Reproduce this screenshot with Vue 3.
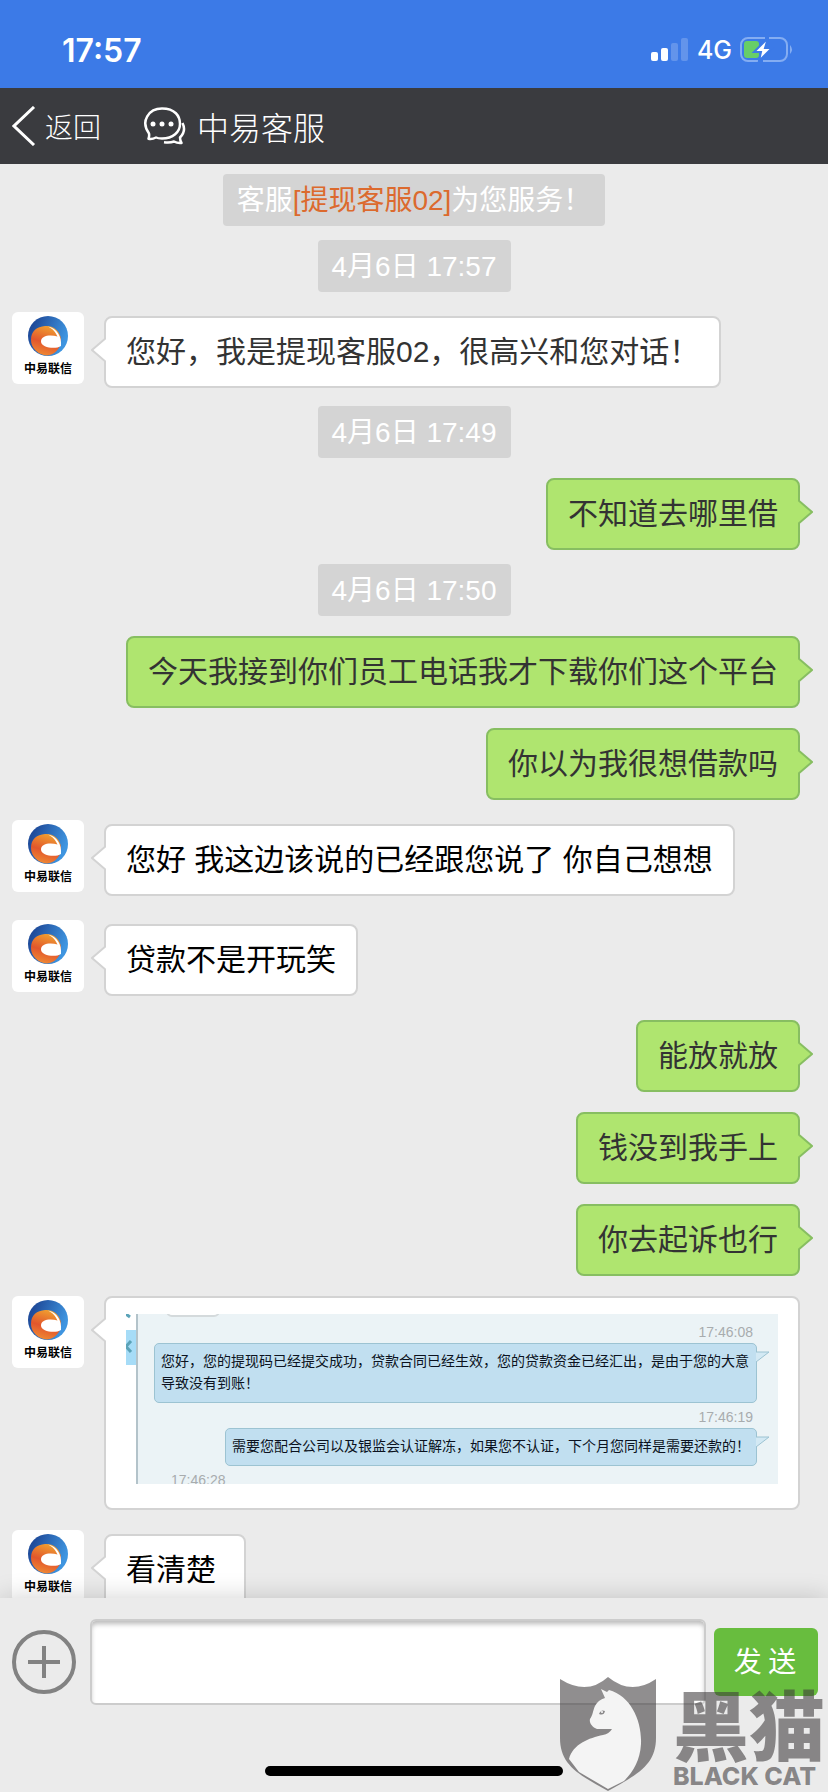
<template>
  <div class="page">
    <header>
      <div class="status">
        <span class="clock">17:57</span>
        <div class="status-right">
          <svg class="signal" viewBox="0 0 38 24" aria-hidden="true">
            <rect x="0" y="14" width="7" height="9" rx="2" />
            <rect x="10" y="10" width="7" height="13" rx="2" />
            <rect class="off" x="20" y="5" width="7" height="18" rx="2" />
            <rect class="off" x="30" y="0" width="7" height="23" rx="2" />
          </svg>
          <span class="net">4G</span>
          <svg class="battery" viewBox="0 0 54 26" aria-hidden="true">
            <path class="case" d="M25 1H8a7 7 0 0 0-7 7v9a7 7 0 0 0 7 7h10M29 1h11a7 7 0 0 1 7 7v9a7 7 0 0 1-7 7H23" />
            <path class="nub" d="M50 8q4 4.500 0 9z" />
            <rect class="level" x="4" y="4" width="15" height="17" rx="3" />
            <path class="bolt" d="M28 1L14 15h7l-2 9L32 11h-7z" />
          </svg>
        </div>
      </div>
      <nav class="nav">
        <a class="back" href="#">
          <svg viewBox="0 0 24 40" aria-hidden="true"><path d="M22 1L2 20l20 19" /></svg>
          <span>返回</span>
        </a>
        <h1 class="title">
          <svg viewBox="0 0 44 38" aria-hidden="true">
            <path d="M6 26.500C-3 14 6 1.500 19 1.500S37 9 37 17 30 31.500 19 31.500q-4 0-6-1-4 2-7.500 1.200Q6.500 29 6 26.500z" />
            <path d="M39.500 16q4 8-2.500 14.500 0 3 1.500 5.500-4 .5-7.500-1.500-4 1.500-10 .7" />
            <circle cx="10" cy="17" r="2.500" />
            <circle cx="19" cy="17" r="2.500" />
            <circle cx="28" cy="17" r="2.500" />
          </svg>
          <span>中易客服</span>
        </h1>
      </nav>
    </header>

    <svg class="defs" aria-hidden="true">
      <defs>
        <linearGradient id="ring" x1="0" y1="0" x2="1" y2="0.400">
          <stop offset="0.200" stop-color="#1f4c9b" />
          <stop offset="1" stop-color="#3f95e0" />
        </linearGradient>
        <linearGradient id="flame" x1="0.600" y1="0" x2="0.300" y2="1">
          <stop offset="0" stop-color="#f0a030" />
          <stop offset="0.550" stop-color="#e2562c" />
          <stop offset="1" stop-color="#f08c34" />
        </linearGradient>
      </defs>
      <symbol id="logo" viewBox="0 0 40 40">
        <circle cx="20" cy="20" r="20" fill="url(#ring)" />
        <path d="M17 10C25 9 33 15 33 24 33 32 27 39 19 39.500 10 39 3 32 3 24 3 15 9 10.500 17 10z" fill="url(#flame)" />
        <path d="M20 10.500C29 12 34 21 33 30 28 33.500 13 32 13 25.500 13 19.500 22 18.500 29.500 20.500 27.500 16 25 13 20 10.500z" fill="#fff" />
      </symbol>
    </svg>

    <main class="chat">
      <template v-for="(m, i) in messages" :key="i">
        <p v-if="m.type === 'notice'" class="tip">客服<em>{{ m.name }}</em>为您服务！</p>
        <p v-else-if="m.type === 'time'" class="tip">{{ m.text }}</p>
        <div v-else class="row" :class="[m.type, { pic: m.shot }]">
          <div v-if="m.type === 'left'" class="avatar">
            <svg><use href="#logo" /></svg>
            <span>中易联信</span>
          </div>
          <div class="bubble" :class="{ soft: m.soft }">
            <svg class="arrow" viewBox="0 0 15 26" aria-hidden="true"><path d="M15 1L1 13l14 12" /></svg>
            <div v-if="m.shot" class="shot">
              <div class="side">
                <svg viewBox="0 0 10 52" aria-hidden="true">
                  <rect y="16" width="10" height="35" />
                  <path d="M0 0l4 3M5 27L0 32.500 5 38" />
                </svg>
              </div>
              <div class="log">
                <i class="chip"></i>
                <template v-for="s in m.shot" :key="s.time">
                  <time :class="{ early: !s.text }">{{ s.time }}</time>
                  <div v-if="s.text" class="say">
                    {{ s.text }}
                    <svg viewBox="0 0 14 12" aria-hidden="true"><path d="M0 1h13L0 11" /></svg>
                  </div>
                </template>
              </div>
            </div>
            <span v-else class="text">{{ m.text }}</span>
          </div>
        </div>
      </template>
    </main>

    <footer>
      <form class="bar" @submit.prevent="send">
        <button type="button" class="plus" aria-label="更多">
          <svg viewBox="0 0 64 64"><circle cx="32" cy="32" r="30" /><path d="M16 32h32M32 16v32" /></svg>
        </button>
        <textarea v-model="draft" aria-label="消息"></textarea>
        <button type="submit" class="send">发 送</button>
      </form>
      <div class="home"></div>
    </footer>

    <div class="mark">
      <svg viewBox="0 0 98 116" aria-hidden="true">
        <path class="shield" d="M1 3Q28 20 49 1 72 20 97 3V62C97 88 80 98 49 115 18 98 1 88 1 62z" />
        <path class="cat" d="M46 22l-4-9 6 3 2-2C72 20 83 45 82 68 81 85 74 96 65 105L49 113 20 96 10 83C14 68 30 62 44 59q6-1 9-6H38c-5-2-8-6-7-10 3-4 3-9 5-13q3-6 10-8z" />
        <path class="eye" d="M40 38q2-5 6-3-1 5-6 3z" />
        <circle class="pupil" cx="43" cy="36" r="1" />
      </svg>
      <div class="words">
        <strong>黑猫</strong>
        <b>BLACK CAT</b>
      </div>
    </div>
  </div>
</template>

<script setup>
import { ref } from 'vue'

const draft = ref('')

const messages = ref([
  { type: 'notice', name: '[提现客服02]' },
  { type: 'time', text: '4月6日 17:57' },
  { type: 'left', text: '您好，我是提现客服02，很高兴和您对话！', soft: true },
  { type: 'time', text: '4月6日 17:49' },
  { type: 'right', text: '不知道去哪里借' },
  { type: 'time', text: '4月6日 17:50' },
  { type: 'right', text: '今天我接到你们员工电话我才下载你们这个平台' },
  { type: 'right', text: '你以为我很想借款吗' },
  { type: 'left', text: '您好 我这边该说的已经跟您说了 你自己想想' },
  { type: 'left', text: '贷款不是开玩笑' },
  { type: 'right', text: '能放就放' },
  { type: 'right', text: '钱没到我手上' },
  { type: 'right', text: '你去起诉也行' },
  {
    type: 'left',
    shot: [
      { time: '17:46:08', text: '您好，您的提现码已经提交成功，贷款合同已经生效，您的贷款资金已经汇出，是由于您的大意导致没有到账！' },
      { time: '17:46:19', text: '需要您配合公司以及银监会认证解冻，如果您不认证，下个月您同样是需要还款的！' },
      { time: '17:46:28' }
    ]
  },
  { type: 'left', text: '看清楚 ' }
])

function send(){
  if (!draft.value.trim()) return
  messages.value.push({ type: 'right', text: draft.value })
  draft.value = ''
}
</script>

<style>
body{ margin:0; background:#ebebeb; }
</style>

<style scoped>
.page{ position:relative; height:100vh; display:flex; flex-direction:column; overflow:hidden; background:#ebebeb; font-family:"Liberation Sans","Noto Sans CJK SC",sans-serif; }
.page *{ box-sizing:border-box; }
svg{ display:block; flex:none; fill:none; }
.defs{ position:absolute; width:0; height:0; }

.status{ height:88px; padding:12px 34px 0 62px; display:flex; align-items:center; justify-content:space-between; background:#3c7ae7; color:#fff; font-family:Inter,sans-serif; }
.clock{ font-size:32px; font-weight:600; }
.status-right{ display:flex; align-items:center; gap:8px; }
.signal{ width:38px; height:24px; fill:#fff; }
.signal .off{ opacity:.2; }
.net{ font-size:25px; font-weight:500; }
.battery{ width:54px; height:26px; }
.case{ stroke:#84adf2; stroke-width:2; }
.nub{ fill:#84adf2; }
.level{ fill:#67ce67; }
.bolt{ fill:#fff; stroke:#3c7ae7; stroke-width:2; }

.nav{ height:76px; padding:0 12px; display:flex; align-items:center; gap:42px; background:#3a3b3f; color:#fff; font-family:"Noto Sans CJK SC",sans-serif; font-weight:300; }
.back{ display:flex; align-items:center; gap:9px; color:#fff; font-size:28px; text-decoration:none; }
.back svg{ width:24px; height:40px; stroke:#fff; stroke-width:3; }
.title{ margin:0; display:flex; align-items:center; gap:10px; font-size:32px; font-weight:300; }
.title svg{ width:44px; height:38px; stroke:#fff; stroke-width:2.5; stroke-linejoin:round; }
.title circle{ fill:#fff; stroke:none; }

.chat{ flex:1; min-height:0; overflow:hidden; padding:16px 28px 0 12px; display:flex; flex-direction:column; gap:20px; }
.tip{ flex:none; align-self:center; margin:-6px -8px 0 8px; padding:2px 14px 0; border-radius:4px; background:#d4d4d4; color:#fff; font-size:28px; line-height:50px; }
.tip em{ color:#dc6a2e; font-style:normal; }

.row{ flex:none; display:flex; align-items:flex-start; }
.row.left{ gap:20px; padding-bottom:4px; }
.row.left .bubble{ margin-top:4px; }
.row.left.pic{ padding-bottom:0; }
.row.left.pic .bubble{ margin-top:0; }
.row.right{ justify-content:flex-end; }
.avatar{ flex:none; width:72px; height:72px; border-radius:6px; background:#fff; display:flex; flex-direction:column; align-items:center; padding-top:4px; }
.avatar svg{ width:40px; height:40px; }
.avatar span{ color:#000; font-size:12px; font-weight:700; line-height:26px; }

.bubble{ position:relative; padding:0 20px; border:2px solid #d3d3d3; border-radius:8px; background:#fff; color:#000; font-size:30px; line-height:68px; }
.bubble.soft{ color:#333; }
.text{ white-space:break-spaces; }
.right .bubble{ background:#afe56f; border-color:#87be61; color:#333; }
.arrow{ position:absolute; top:19px; left:-15px; width:15px; height:26px; fill:#fff; stroke:#d3d3d3; stroke-width:2; }
.right .arrow{ left:auto; right:-15px; transform:scaleX(-1); fill:#afe56f; stroke:#87be61; }

.pic .bubble{ flex:1; min-width:0; padding:16px 20px 24px; }
.shot{ height:170px; overflow:hidden; display:flex; font-size:14px; line-height:22px; }
.side{ width:12px; border-right:2px solid #b3c3ca; }
.side svg{ width:10px; height:52px; stroke:#5ba3b8; stroke-width:3; }
.side rect{ fill:#a6dcf7; stroke:none; }
.log{ position:relative; flex:1; padding:7px 21px 0 16px; display:flex; flex-direction:column; align-items:flex-end; background:#ebf3f6; }
.log time{ margin-right:4px; color:#a8acae; }
.log time.early{ align-self:flex-start; margin-left:17px; }
.say{ position:relative; margin-bottom:3px; padding:6px 6px 8px; border:1px solid #9cc3d2; border-radius:5px; background:#c1dff0; color:#0b1220; }
.say svg{ position:absolute; top:7px; right:-14px; width:14px; height:12px; fill:#d3e9f4; stroke:#9cc3d2; }
.chip{ position:absolute; top:-20px; left:28px; width:54px; height:23px; border:2px solid #d4dadc; border-radius:6px; background:#fff; }

footer{ position:relative; flex:none; background:#ebebeb; box-shadow:0 0 24px rgba(0,0,0,.18); }
.bar{ display:flex; align-items:center; padding:21px 10px 61px 12px; }
.plus{ width:64px; height:64px; padding:0; border:0; background:none; margin-right:14px; }
.plus svg{ width:64px; height:64px; stroke:#828282; stroke-width:4; }
.bar textarea{ flex:1; min-width:0; height:86px; margin-right:8px; padding:16px; border:2px solid #ccc; border-radius:6px; background:#fff; box-shadow:inset 0 4px 5px -1px #bbb; font:inherit; font-size:30px; resize:none; outline:0; }
.send{ width:104px; height:68px; padding:0 2px 4px 0; border:0; border-radius:6px; background:#68bd3e; color:#fff; font-family:"Noto Sans CJK SC",sans-serif; font-size:28px; }
.home{ width:36%; height:10px; margin:0 auto 16px; border-radius:5px; background:#000; }

.mark{ position:absolute; right:2px; bottom:0; display:flex; gap:16px; align-items:flex-end; pointer-events:none; color:rgba(60,56,58,.57); font-family:"Noto Sans CJK SC",sans-serif; }
.mark svg{ width:98px; height:116px; }
.shield{ fill:rgba(60,56,58,.57); }
.cat{ fill:#f4f4f4; }
.eye{ fill:#8a888a; }
.pupil{ fill:#fff; }
.words{ width:153px; display:flex; flex-direction:column; }
.words strong{ font-size:76px; font-weight:900; line-height:76px; }
.words b{ font-family:Inter,sans-serif; font-size:25px; font-weight:800; line-height:32px; white-space:nowrap; }
</style>
